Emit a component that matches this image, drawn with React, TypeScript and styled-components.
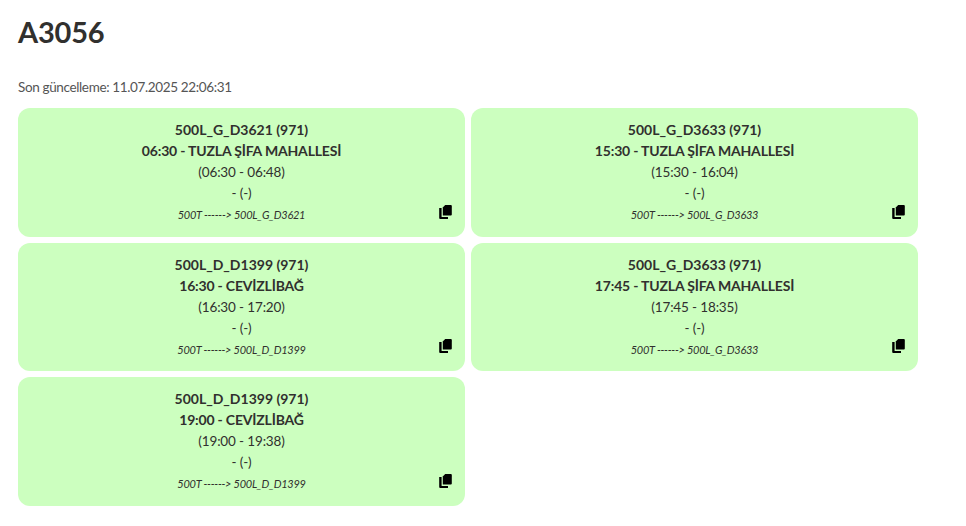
import { createGlobalStyle, styled } from "styled-components";

const GlobalStyle = createGlobalStyle`
  html, body {
    margin: 0;
    padding: 0;
    background: #fff;
  }
  body {
    font-family: "Lato", "Noto Sans", sans-serif;
    color: #31302e;
  }
`;

const Page = styled.div`
  width: 966px;
  height: 526px;
  padding: 0 18px;
  box-sizing: border-box;
  overflow: hidden;
`;

const Title = styled.h1`
  margin: 0;
  padding-top: 11px;
  height: 74px;
  box-sizing: border-box;
  font-size: 29px;
  line-height: 42px;
  font-weight: 700;
  letter-spacing: -0.2px;
`;

const Updated = styled.p`
  margin: 0;
  height: 34px;
  padding-top: 3px;
  box-sizing: border-box;
  font-size: 13.5px;
  line-height: 21px;
  letter-spacing: -0.36px;
  color: #555;
`;

const Grid = styled.div`
  display: grid;
  grid-template-columns: 447px 447px;
  gap: 6px;
`;

const Card = styled.div`
  position: relative;
  height: 128.6px;
  box-sizing: border-box;
  background: #ccffbf;
  border-radius: 12px;
  padding-top: 11px;
  text-align: center;
  font-size: 13.5px;
  line-height: 21px;
`;

const CardHead = styled.div`
  margin-bottom: 1px;
  font-size: 14px;
  font-weight: 700;
`;

const Code = styled.div`
  letter-spacing: 0;
`;

const Headsign = styled.div`
  letter-spacing: -0.18px;
`;

const Line = styled.div`
  letter-spacing: -0.14px;
`;

const Route = styled.div`
  font-size: 11px;
  font-style: italic;
  line-height: 22px;
  letter-spacing: -0.26px;
`;

const CopyButton = styled.span`
  position: absolute;
  right: 13px;
  bottom: 18px;
  width: 13px;
  height: 14px;
  display: flex;
`;

function CopyIcon() {
  return (
    <svg width="13" height="14" viewBox="0 0 13 14">
      <path d="M6.2 0H11.8a1 1 0 0 1 1 1V9.4a1 1 0 0 1-1 1H3.8V2.4z" fill="#000" />
      <path d="M0.2 3H2.6V12H9V14H1.2a1 1 0 0 1-1-1z" fill="#000" />
    </svg>
  );
}

const trips = [
  { code: "500L_G_D3621 (971)", head: "06:30 - TUZLA ŞİFA MAHALLESİ", span: "(06:30 - 06:48)", route: "500T ------> 500L_G_D3621" },
  { code: "500L_G_D3633 (971)", head: "15:30 - TUZLA ŞİFA MAHALLESİ", span: "(15:30 - 16:04)", route: "500T ------> 500L_G_D3633" },
  { code: "500L_D_D1399 (971)", head: "16:30 - CEVİZLİBAĞ", span: "(16:30 - 17:20)", route: "500T ------> 500L_D_D1399" },
  { code: "500L_G_D3633 (971)", head: "17:45 - TUZLA ŞİFA MAHALLESİ", span: "(17:45 - 18:35)", route: "500T ------> 500L_G_D3633" },
  { code: "500L_D_D1399 (971)", head: "19:00 - CEVİZLİBAĞ", span: "(19:00 - 19:38)", route: "500T ------> 500L_D_D1399" },
];

export default function App() {
  return (
    <>
      <GlobalStyle />
      <Page>
        <Title>A3056</Title>
        <Updated>Son güncelleme: 11.07.2025 22:06:31</Updated>
        <Grid>
          {trips.map((t, i) => (
            <Card key={i}>
              <CardHead>
                <Code>{t.code}</Code>
                <Headsign>{t.head}</Headsign>
              </CardHead>
              <Line>{t.span}</Line>
              <Line>- (-)</Line>
              <Route>{t.route}</Route>
              <CopyButton>
                <CopyIcon />
              </CopyButton>
            </Card>
          ))}
        </Grid>
      </Page>
    </>
  );
}
